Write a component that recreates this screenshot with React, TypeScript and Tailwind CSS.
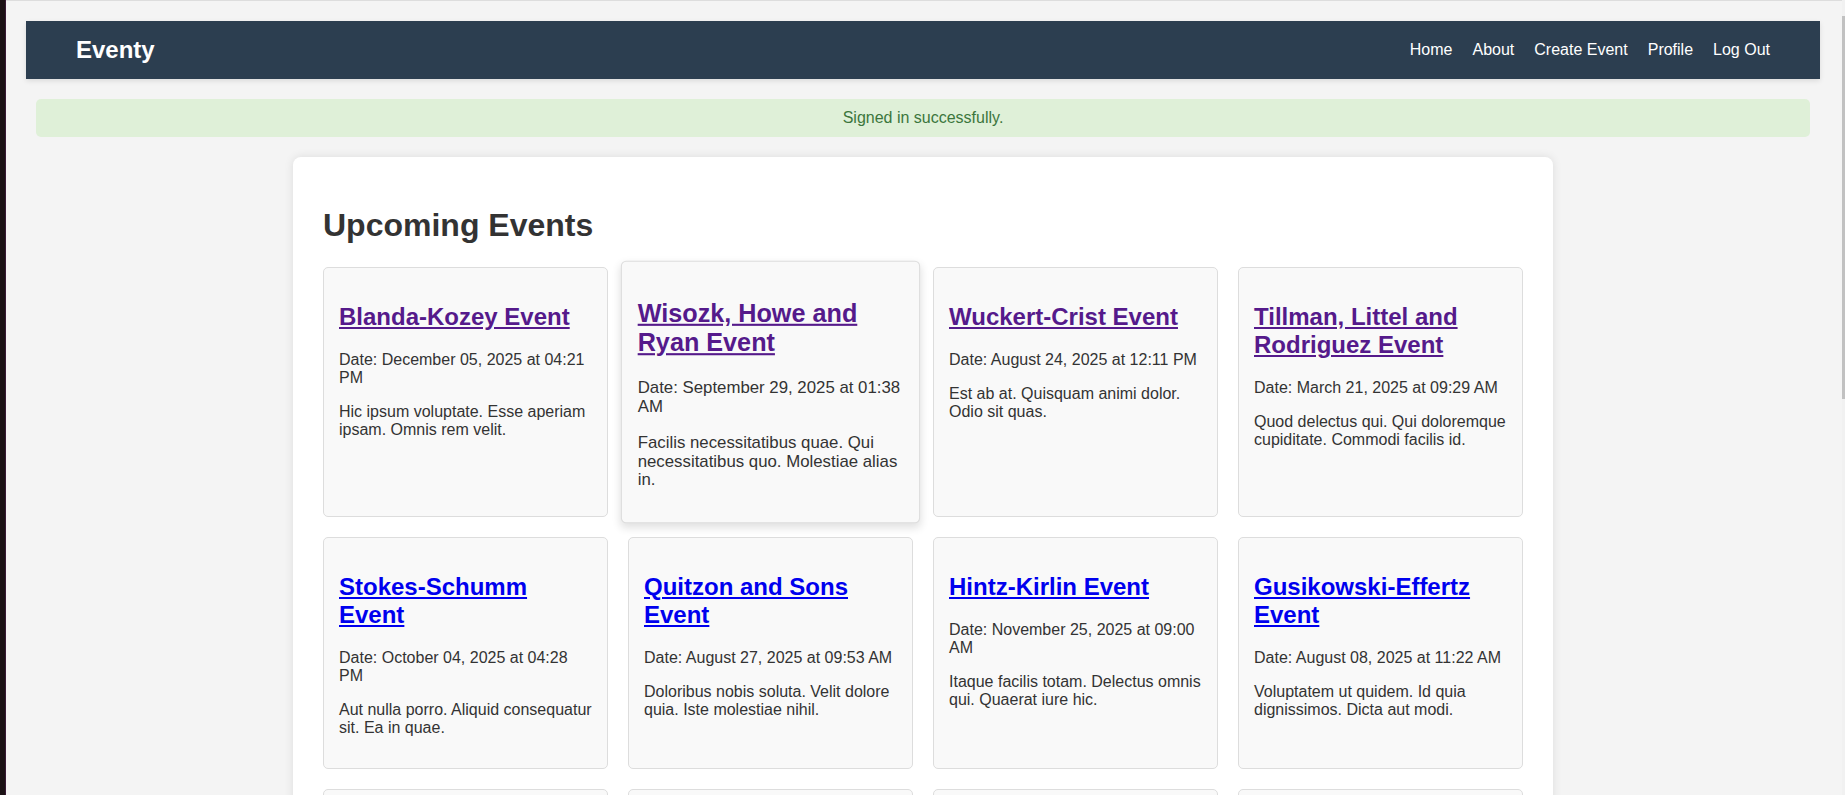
import React from 'react'

type EventItem = {
  title: string
  date: string
  description: string
  visited?: boolean
  hovered?: boolean
}

const events: EventItem[] = [
  {
    title: 'Blanda-Kozey Event',
    date: 'December 05, 2025 at 04:21 PM',
    description: 'Hic ipsum voluptate. Esse aperiam ipsam. Omnis rem velit.',
    visited: true,
  },
  {
    title: 'Wisozk, Howe and Ryan Event',
    date: 'September 29, 2025 at 01:38 AM',
    description: 'Facilis necessitatibus quae. Qui necessitatibus quo. Molestiae alias in.',
    visited: true,
    hovered: true,
  },
  {
    title: 'Wuckert-Crist Event',
    date: 'August 24, 2025 at 12:11 PM',
    description: 'Est ab at. Quisquam animi dolor. Odio sit quas.',
    visited: true,
  },
  {
    title: 'Tillman, Littel and Rodriguez Event',
    date: 'March 21, 2025 at 09:29 AM',
    description: 'Quod delectus qui. Qui doloremque cupiditate. Commodi facilis id.',
    visited: true,
  },
  {
    title: 'Stokes-Schumm Event',
    date: 'October 04, 2025 at 04:28 PM',
    description: 'Aut nulla porro. Aliquid consequatur sit. Ea in quae.',
  },
  {
    title: 'Quitzon and Sons Event',
    date: 'August 27, 2025 at 09:53 AM',
    description: 'Doloribus nobis soluta. Velit dolore quia. Iste molestiae nihil.',
  },
  {
    title: 'Hintz-Kirlin Event',
    date: 'November 25, 2025 at 09:00 AM',
    description: 'Itaque facilis totam. Delectus omnis qui. Quaerat iure hic.',
  },
  {
    title: 'Gusikowski-Effertz Event',
    date: 'August 08, 2025 at 11:22 AM',
    description: 'Voluptatem ut quidem. Id quia dignissimos. Dicta aut modi.',
  },
  {
    title: 'Kuhn-Bartell Event',
    date: 'July 14, 2025 at 03:05 PM',
    description: 'Sed porro eius. Nihil quia ut. Amet sint enim.',
  },
  {
    title: 'Feeney Group Event',
    date: 'May 02, 2025 at 10:47 AM',
    description: 'Magni ut aut. Nam minus et. Rerum ipsa sunt.',
  },
  {
    title: 'Runolfsdottir LLC Event',
    date: 'June 19, 2025 at 06:30 PM',
    description: 'Ut vero eos. Velit fugiat ea. Illo quos aut.',
  },
  {
    title: 'Schiller-Mraz Event',
    date: 'April 11, 2025 at 08:15 AM',
    description: 'Non quas odit. Ipsum et vel. Eum nemo culpa.',
  },
]

function EventCard({ event }: { event: EventItem }) {
  return (
    <div
      className={
        event.hovered
          ? 'relative z-10 scale-[1.05] rounded-[5px] border border-[#ddd] bg-[#f9f9f9] p-[15px] shadow-[0_4px_8px_rgba(0,0,0,0.12)]'
          : 'rounded-[5px] border border-[#ddd] bg-[#f9f9f9] p-[15px]'
      }
    >
      <h2 className="my-[0.83em] text-[24px] font-bold">
        <a
          href="#"
          className={event.visited ? 'text-[#551a8b] underline' : 'text-[#0000ee] underline'}
        >
          {event.title}
        </a>
      </h2>
      <p className="my-4">Date: {event.date}</p>
      <p className="my-4">{event.description}</p>
    </div>
  )
}

export default function App() {
  return (
    <div className="flex h-[795px] overflow-hidden bg-[#f4f4f4] font-['Liberation_Sans',Arial,sans-serif] text-[16px] leading-[normal] text-[#333]">
      {/* window edge */}
      <div className="w-[5px] shrink-0 bg-[#1b1215]" />
      <div className="w-px shrink-0 bg-[#3a1a35]" />

      <div className="flex-1 min-w-0 border-t border-[#ddd] pt-5 pl-5 pr-[22px]">
        {/* Navbar */}
        <header className="flex items-center justify-between bg-[#2c3e50] px-[50px] py-[15px] text-white shadow-[0_2px_5px_rgba(0,0,0,0.1)]">
          <a href="#" className="text-[24px] font-bold">
            Eventy
          </a>
          <nav className="flex items-center gap-5">
            <a href="#">Home</a>
            <a href="#">About</a>
            <a href="#">Create Event</a>
            <a href="#">Profile</a>
            <a href="#">Log Out</a>
          </nav>
        </header>

        {/* Flash */}
        <div className="mx-[10px] mt-5 rounded-[5px] bg-[#dff0d8] p-[10px] text-center text-[#3c763d]">
          Signed in successfully.
        </div>

        {/* Main */}
        <main className="mx-auto mt-5 w-[1260px] rounded-[8px] bg-white px-[30px] pt-[30px] pb-[30px] shadow-[0_0_10px_rgba(0,0,0,0.1)]">
          <h1 className="mt-5 mb-[23px] text-[32px] font-bold">Upcoming Events</h1>
          <div className="grid grid-cols-4 gap-5">
            {events.map((event) => (
              <EventCard key={event.title} event={event} />
            ))}
          </div>
        </main>
      </div>

      {/* scrollbar */}
      <div className="w-[3px] shrink-0 bg-[#f1f1f1] pt-4">
        <div className="h-[383px] bg-[#c1c1c1]" />
      </div>
    </div>
  )
}
